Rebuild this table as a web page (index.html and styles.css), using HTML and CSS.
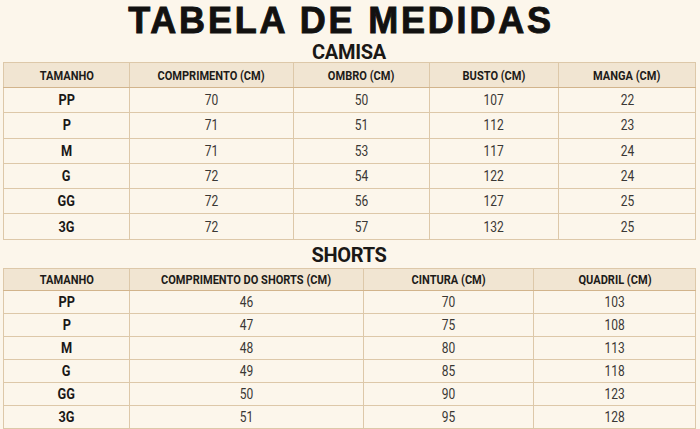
FILE: index.html
```html
<!DOCTYPE html>
<html lang="pt-BR">
<head>
<meta charset="utf-8">
<title>Tabela de Medidas</title>
<link rel="stylesheet" href="styles.css">
</head>
<body>
<main class="sheet">
  <h1 class="title">TABELA DE MEDIDAS</h1>

  <h2 class="section-title">CAMISA</h2>
  <table class="sizes sizes-camisa">
    <colgroup>
      <col class="c-size1">
      <col class="c-comp1">
      <col class="c-ombro">
      <col class="c-busto">
      <col class="c-manga">
    </colgroup>
    <thead>
      <tr><th><span class="cx">TAMANHO</span></th><th><span class="cx">COMPRIMENTO (CM)</span></th><th><span class="cx">OMBRO (CM)</span></th><th><span class="cx">BUSTO (CM)</span></th><th><span class="cx">MANGA (CM)</span></th></tr>
    </thead>
    <tbody>
      <tr><th><span class="cx">PP</span></th><td><span class="cx">70</span></td><td><span class="cx">50</span></td><td><span class="cx">107</span></td><td><span class="cx">22</span></td></tr>
      <tr><th><span class="cx">P</span></th><td><span class="cx">71</span></td><td><span class="cx">51</span></td><td><span class="cx">112</span></td><td><span class="cx">23</span></td></tr>
      <tr><th><span class="cx">M</span></th><td><span class="cx">71</span></td><td><span class="cx">53</span></td><td><span class="cx">117</span></td><td><span class="cx">24</span></td></tr>
      <tr><th><span class="cx">G</span></th><td><span class="cx">72</span></td><td><span class="cx">54</span></td><td><span class="cx">122</span></td><td><span class="cx">24</span></td></tr>
      <tr><th><span class="cx">GG</span></th><td><span class="cx">72</span></td><td><span class="cx">56</span></td><td><span class="cx">127</span></td><td><span class="cx">25</span></td></tr>
      <tr><th><span class="cx">3G</span></th><td><span class="cx">72</span></td><td><span class="cx">57</span></td><td><span class="cx">132</span></td><td><span class="cx">25</span></td></tr>
    </tbody>
  </table>

  <h2 class="section-title section-shorts">SHORTS</h2>
  <table class="sizes sizes-shorts">
    <colgroup>
      <col class="c-size2">
      <col class="c-comp2">
      <col class="c-cintura">
      <col class="c-quadril">
    </colgroup>
    <thead>
      <tr><th><span class="cx">TAMANHO</span></th><th><span class="cx">COMPRIMENTO DO SHORTS (CM)</span></th><th><span class="cx">CINTURA (CM)</span></th><th><span class="cx">QUADRIL (CM)</span></th></tr>
    </thead>
    <tbody>
      <tr><th><span class="cx">PP</span></th><td><span class="cx">46</span></td><td><span class="cx">70</span></td><td><span class="cx">103</span></td></tr>
      <tr><th><span class="cx">P</span></th><td><span class="cx">47</span></td><td><span class="cx">75</span></td><td><span class="cx">108</span></td></tr>
      <tr><th><span class="cx">M</span></th><td><span class="cx">48</span></td><td><span class="cx">80</span></td><td><span class="cx">113</span></td></tr>
      <tr><th><span class="cx">G</span></th><td><span class="cx">49</span></td><td><span class="cx">85</span></td><td><span class="cx">118</span></td></tr>
      <tr><th><span class="cx">GG</span></th><td><span class="cx">50</span></td><td><span class="cx">90</span></td><td><span class="cx">123</span></td></tr>
      <tr><th><span class="cx">3G</span></th><td><span class="cx">51</span></td><td><span class="cx">95</span></td><td><span class="cx">128</span></td></tr>
    </tbody>
  </table>
</main>
</body>
</html>
```

FILE: styles.css
```css
html, body {
  margin: 0;
  padding: 0;
  background: #fcf6eb;
}

.sheet {
  width: 692px;
  margin-left: 3px;
  display: flex;
  flex-direction: column;
  color: #161412;
  font-family: "Roboto", "Liberation Sans", sans-serif;
}

.title {
  margin: 1px 16px 0 0;
  height: 40px;
  line-height: 40px;
  font-family: "Liberation Sans", "Roboto", sans-serif;
  font-weight: 700;
  font-size: 36px;
  letter-spacing: 2.8px;
  -webkit-text-stroke: 0.9px #121110;
  text-align: center;
  color: #121110;
}

.section-title {
  margin: 0;
  height: 21px;
  line-height: 22px;
  font-size: 20px;
  font-weight: 700;
  letter-spacing: -0.3px;
  text-align: center;
  color: #1a1816;
}

.section-shorts {
  height: 25px;
  line-height: 25px;
  padding-top: 3px;
}

.sizes {
  width: 692px;
  table-layout: fixed;
  border-collapse: collapse;
  border: 1px solid #d4b995;
}

.sizes th,
.sizes td {
  border: 1px solid #ddc8a9;
  padding: 0;
  text-align: center;
  vertical-align: middle;
  white-space: nowrap;
}

.sizes thead th {
  background: #f1e5d2;
  font-size: 13px;
  font-weight: 700;
  color: #1d1b19;
  border-bottom-color: #d2b48c;
}

.cx {
  display: inline-block;
  transform: scaleX(0.85);
}

.sizes tbody th {
  font-size: 15px;
  font-weight: 700;
  color: #1a1817;
}

.sizes tbody td {
  font-size: 15px;
  font-weight: 400;
  color: #3a3835;
}

.sizes tbody td .cx {
  transform: scaleX(0.8);
}

.sizes-camisa thead tr { height: 25px; }
.sizes-camisa tbody tr { height: 25.3px; }

.sizes-shorts thead tr { height: 22px; }
.sizes-shorts tbody tr { height: 23px; }

.c-size1 { width: 126px; }
.c-comp1 { width: 164px; }
.c-ombro { width: 136px; }
.c-busto { width: 129px; }
.c-manga { width: 137px; }

.c-size2 { width: 126px; }
.c-comp2 { width: 234px; }
.c-cintura { width: 170px; }
.c-quadril { width: 162px; }
```
